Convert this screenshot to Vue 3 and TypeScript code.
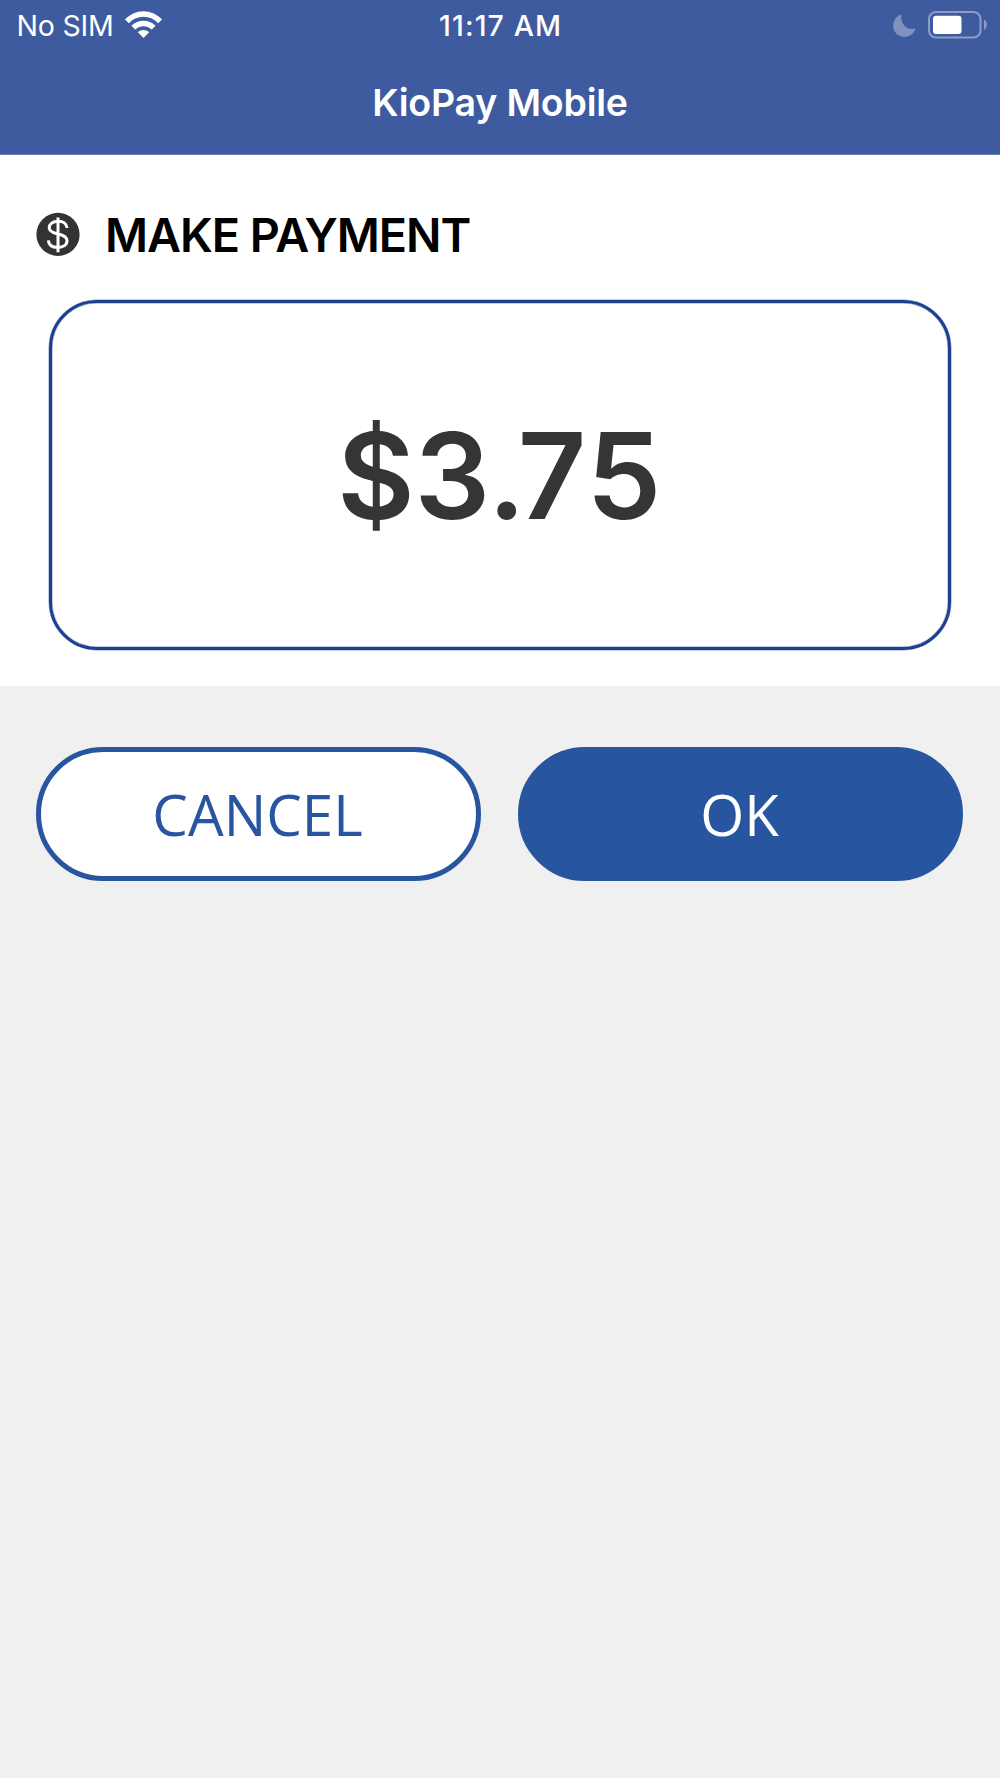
<script setup lang="ts">
const title = 'KioPay Mobile'
const heading = 'MAKE PAYMENT'
const dollars = '$3.'
const cents = '75'
</script>

<template>
  <main class="screen">
    <header class="topbar">
      <div class="status">
        <div class="carrier">
          <span class="nosim">No SIM</span>
          <svg class="wifi" width="37" height="28" viewBox="0 0 37 28">
            <path d="M0 8.4C10.4-2.6 26.6-2.6 37 8.4L33.1 12.2C24.8 3.7 12.2 3.7 3.9 12.2Z" />
            <path d="M6.4 14.8C13.1 8 23.9 8 30.6 14.8L26.8 18.6C22 14 15 14 10.2 18.6Z" />
            <path d="M12.8 21.2C16 18.2 21 18.2 24.2 21.2L18.5 27Z" />
          </svg>
        </div>
        <span class="time">11:17 AM</span>
        <div class="indicators">
          <svg class="moon" width="23" height="24" viewBox="0 0 23 24">
            <path d="M8.6 .3C6.5 8.5 13 17.2 22.6 14.6C20.8 20 16.6 23 11.4 23C5.2 23 .2 18.2 .2 11.8C.2 6.3 3.5 2 8.6 .3Z" />
          </svg>
          <svg class="battery" width="60" height="28" viewBox="0 0 60 28">
            <rect class="shell" x="1" y="1" width="51.5" height="25.5" rx="7" />
            <rect class="charge" x="5" y="4.7" width="28.5" height="18.3" rx="3" />
            <path class="cap" d="M56 8.6Q58.9 10.4 58.9 13.8T56 19Z" />
          </svg>
        </div>
      </div>
      <h1 class="title">{{ title }}</h1>
    </header>
    <section class="payment">
      <div class="heading">
        <svg width="44" height="44" viewBox="0 0 44 44">
          <circle cx="22" cy="22.4" r="21.6" fill="#333" />
          <path class="dollar" d="M31 16C30.7 11.8 27.2 9.3 22 9.3C16.8 9.3 13.2 12 13.2 15.8C13.2 19.4 16.2 20.8 22 22C27.9 23.2 31 24.9 31 28.8C31 32.9 27.5 35.4 22 35.4C16.4 35.4 12.6 33 12.4 28.4M22 5.4V40.2" />
        </svg>
        <h2 class="label">{{ heading }}</h2>
      </div>
      <div class="card">
        <span class="amount">{{ dollars }}<span class="cents">{{ cents }}</span></span>
      </div>
    </section>
    <div class="actions">
      <button class="btn cancel" type="button"><span>CANCEL</span></button>
      <button class="btn ok" type="button"><span>OK</span></button>
    </div>
  </main>
</template>

<style>
body { background: #f0f0f0; }
</style>

<style scoped>
.screen {
  height: 1778px;
  background: #f0f0f0;
  font-family: Inter, "Liberation Sans", sans-serif;
  overflow: hidden;
}
.topbar {
  box-sizing: border-box;
  height: 155px;
  background: #3d5b9e;
  border-bottom: 1px solid #6a82b6;
  color: #fff;
}
.status {
  display: grid;
  grid-template-columns: 1fr auto 1fr;
  align-items: center;
  height: 50px;
  font-size: 28.5px;
  line-height: 52px;
}
.carrier { display: flex; align-items: center; padding-left: 16.5px; }
.nosim { letter-spacing: -0.2px; }
.wifi { fill: #fff; margin: -3px 0 0 11.5px; }
.time { font-weight: 500; letter-spacing: 1.1px; margin-right: -1.1px; }
.indicators { display: flex; align-items: center; justify-content: flex-end; gap: 12px; padding: 0 12px 3px 0; }
.moon { fill: #8292bf; margin-top: 2px; }
.shell { fill: none; stroke: #8d9dc5; stroke-width: 2; }
.charge { fill: #fff; }
.cap { fill: #8d9dc5; }
.title {
  margin: 0;
  height: 104px;
  line-height: 106px;
  text-align: center;
  font-size: 37.5px;
  font-weight: 600;
  letter-spacing: -0.2px;
}
.payment {
  box-sizing: border-box;
  height: 531px;
  background: #fff;
  padding: 57px 49px 0;
}
.heading { display: flex; align-items: center; height: 44px; margin-left: -13px; gap: 25px; }
.dollar { fill: none; stroke: #fff; stroke-width: 3; }
.label {
  margin: 0;
  padding-top: 1px;
  font-size: 46.7px;
  font-weight: 600;
  line-height: 46px;
  letter-spacing: -1.02px;
  white-space: nowrap;
}
.card {
  box-sizing: border-box;
  height: 350px;
  margin-top: 44px;
  border: 3px solid #1d3f90;
  box-shadow: 0 0 0 0.5px #8fa0c8, inset 0 0 0 0.5px #8fa0c8;
  border-radius: 48px;
  display: flex;
  align-items: center;
  justify-content: center;
}
.amount {
  font-size: 119px;
  font-weight: 600;
  line-height: 1;
  padding-top: 2px;
  color: #353535;
}
.cents { margin-left: -8px; letter-spacing: 1.5px; }
.actions { display: flex; gap: 37.5px; padding: 61px 37.5px 0 36px; }
.btn {
  box-sizing: border-box;
  flex: 1;
  height: 134px;
  padding: 2px 0 0;
  border: 5.5px solid #28559f;
  border-radius: 67px;
  font: 400 56.5px/1 "Open Sans", "Noto Sans", sans-serif;
}
.btn span { margin-left: -1.5px; }
.cancel { background: #fff; color: #28559f; }
.ok { background: #28559f; color: #fff; }
</style>
